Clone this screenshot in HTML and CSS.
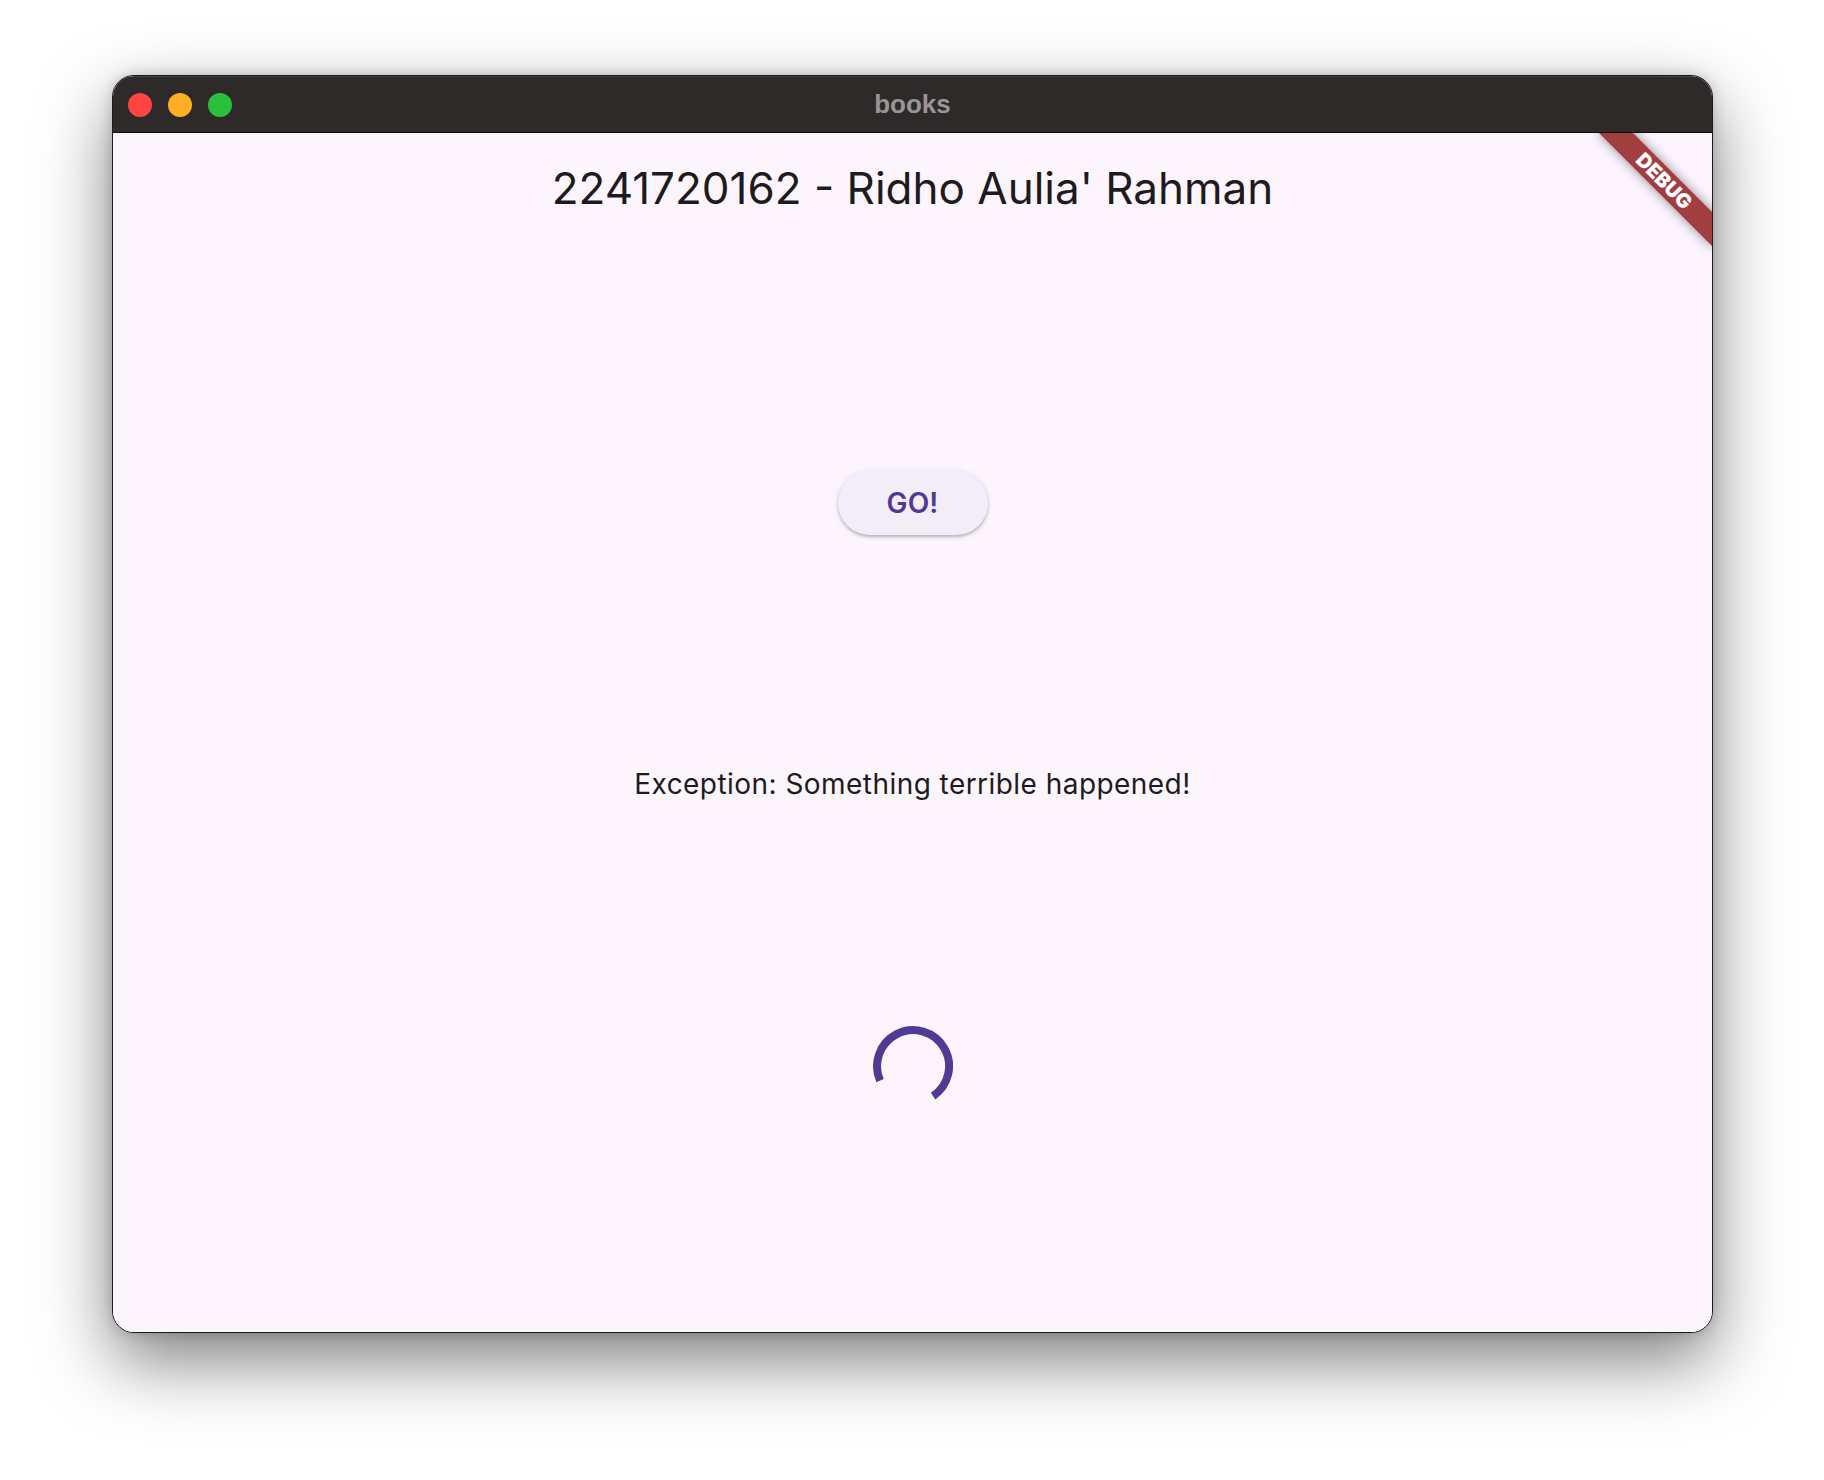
FILE: index.html
```html
<!DOCTYPE html>
<html>
<head>
<meta charset="utf-8">
<link rel="stylesheet" href="styles.css">
</head>
<body>
<div class="stage">
  <div class="window">
    <div class="titlebar">
      <div class="lights">
        <span class="light red"></span>
        <span class="light yellow"></span>
        <span class="light green"></span>
      </div>
      <div class="wintitle">books</div>
      <div></div>
    </div>
    <div class="content">
      <header class="appbar">2241720162 - Ridho Aulia' Rahman</header>
      <main class="body">
        <button class="go">GO!</button>
        <p class="message">Exception: Something terrible happened!</p>
        <svg class="spinner" width="80" height="80" viewBox="0 0 80 80">
          <path d="M60.1 70.1 A36 36 0 1 0 7.1 54.6" fill="none" stroke="#4f3b93" stroke-width="8" stroke-linecap="butt"/>
        </svg>
      </main>
      <div class="banner">DEBUG</div>
    </div>
  </div>
</div>
</body>
</html>
```
FILE: styles.css
```css
html, body {
  margin: 0;
  padding: 0;
  background: #ffffff;
}
.stage {
  width: 1824px;
  height: 1480px;
  padding: 75px 0 0 112px;
  box-sizing: border-box;
  background: #ffffff;
}
.window {
  width: 1601px;
  height: 1258px;
  box-sizing: border-box;
  border: 1px solid #1b1818;
  border-radius: 22px;
  overflow: hidden;
  display: flex;
  flex-direction: column;
  box-shadow: 0 28px 70px rgba(0,0,0,0.5), 0 0 14px rgba(0,0,0,0.18);
  background: #fdf5fe;
}
.titlebar {
  height: 56px;
  flex: none;
  background: #2f2a2a;
  border-bottom: 1px solid #0e0c0c;
  display: grid;
  grid-template-columns: 1fr auto 1fr;
  align-items: center;
  box-shadow: inset 0 1px 0 rgba(255,255,255,0.12);
}
.lights {
  display: flex;
  gap: 16px;
  padding-left: 15px;
}
.light {
  width: 24px;
  height: 24px;
  border-radius: 50%;
  display: block;
}
.red { background: #fe4542; }
.yellow { background: #fdb024; }
.green { background: #29c13b; }
.wintitle {
  font-family: "Liberation Sans", Arial, sans-serif;
  font-weight: 700;
  font-size: 26px;
  color: #9b9495;
  line-height: 56px;
  padding-bottom: 2px;
}
.content {
  flex: 1;
  position: relative;
  overflow: hidden;
  display: flex;
  flex-direction: column;
  background: #fdf5fe;
  font-family: Inter, "Noto Sans", sans-serif;
  color: #1d1b20;
}
.appbar {
  height: 112px;
  flex: none;
  display: flex;
  align-items: center;
  justify-content: center;
  font-size: 44px;
  font-weight: 400;
  padding-bottom: 2px;
  box-sizing: border-box;
}
.body {
  flex: 1;
  display: flex;
  flex-direction: column;
  align-items: center;
  justify-content: space-evenly;
}
.go {
  width: 150px;
  height: 64px;
  border: none;
  border-radius: 32px;
  background: #f3edf7;
  color: #4f3b93;
  font-family: Inter, "Noto Sans", sans-serif;
  font-weight: 600;
  font-size: 28px;
  letter-spacing: 0.2px;
  box-shadow: 0 2px 3px rgba(0,0,0,0.22), 0 1px 6px 1px rgba(0,0,0,0.08);
  padding: 0;
}
.message {
  margin: 0;
  font-size: 28px;
  line-height: 34px;
  padding-top: 6px;
  letter-spacing: 0.45px;
}
.spinner {
  display: block;
}
.banner {
  position: absolute;
  top: 36px;
  right: -32px;
  width: 160px;
  height: 24px;
  background: #a23d40;
  color: #ffffff;
  font-family: Inter, "Liberation Sans", sans-serif;
  font-weight: 900;
  font-size: 20px;
  line-height: 24px;
  text-align: center;
  transform: rotate(45deg);
  box-shadow: 0 0 12px rgba(0,0,0,0.45);
}
```
